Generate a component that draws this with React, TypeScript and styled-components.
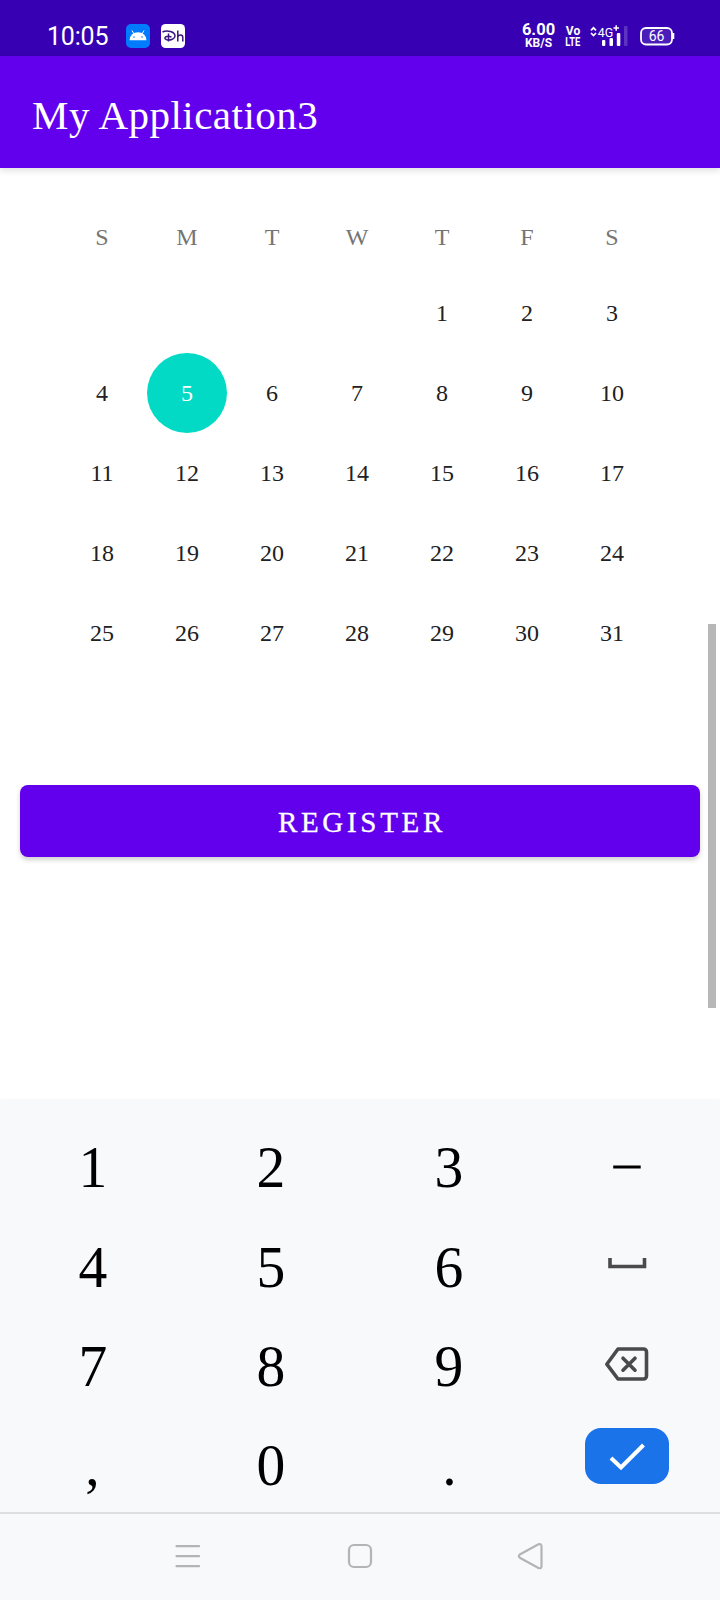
import React from "react";
import styled, { createGlobalStyle } from "styled-components";

const GlobalStyle = createGlobalStyle`
  * { box-sizing: border-box; }
  body { margin: 0; background: #fff; }
`;

const serif = `"Liberation Serif", "Times New Roman", serif`;
const sans = `Roboto, "Liberation Sans", sans-serif`;

const Screen = styled.div`
  position: relative;
  display: flex;
  flex-direction: column;
  width: 720px;
  height: 1600px;
  overflow: hidden;
  background: #fff;
  font-family: ${serif};
`;

const StatusBar = styled.header`
  display: flex;
  align-items: flex-start;
  justify-content: space-between;
  height: 56px;
  padding: 23px 45px 0 47px;
  background: #3700b3;
  color: #fff;
  font-family: ${sans};
`;

const StatusGroup = styled.div`
  display: flex;
  align-items: flex-start;
  height: 26px;
`;

const Clock = styled.span`
  width: 79px;
  font-size: 25px;
  line-height: 27px;
  letter-spacing: -0.2px;
  white-space: nowrap;
`;

const AppBadge = styled.svg`
  display: block;
  width: 24px;
  height: 24px;
  margin: 1px 11px 0 0;
`;

const Stack = styled.div<{ $width: number; $gap: number; $top?: number }>`
  display: flex;
  flex-direction: column;
  align-items: center;
  width: ${(p) => p.$width}px;
  margin-right: ${(p) => p.$gap}px;
  padding-top: ${(p) => p.$top ?? 0}px;
  font-weight: 700;
  white-space: nowrap;
`;

const StackLine = styled.span<{ $size: number; $height: number; $stretch?: number }>`
  font-size: ${(p) => p.$size}px;
  line-height: ${(p) => p.$height}px;
  transform: scaleX(${(p) => p.$stretch ?? 1});
`;

const Signal = styled.svg`
  display: block;
  width: 40px;
  height: 26px;
  margin-right: 11px;
`;

const Battery = styled.svg`
  display: block;
  width: 35px;
  height: 26px;
`;

const AppBar = styled.div`
  display: flex;
  align-items: center;
  height: 112px;
  padding: 5px 32px 0;
  background: #6200ee;
  color: #fff;
  box-shadow: 0 2px 7px rgba(0, 0, 0, 0.14);
`;

const Title = styled.h1`
  margin: 0;
  font-size: 41px;
  font-weight: 400;
  line-height: 48px;
  letter-spacing: 0.48px;
  white-space: nowrap;
`;

const Content = styled.main`
  display: flex;
  flex-direction: column;
  height: 932px;
  padding: 32px 20px 0;
`;

const Calendar = styled.div`
  display: grid;
  grid-template-columns: repeat(7, 85px);
  grid-template-rows: 73px repeat(5, 80px);
  justify-content: center;
  width: 674px;
`;

const Weekday = styled.div`
  display: flex;
  justify-content: center;
  padding-top: 23px;
  color: #757575;
  font-size: 24px;
  line-height: 28px;
`;

const Day = styled.div<{ $selected: boolean }>`
  display: flex;
  align-items: center;
  justify-content: center;
  justify-self: center;
  width: 80px;
  height: 80px;
  border-radius: 50%;
  background: ${(p) => (p.$selected ? "#03dac5" : "transparent")};
  color: ${(p) => (p.$selected ? "#fff" : "#212121")};
  font-size: 24px;
  line-height: 28px;
`;

const RegisterButton = styled.button`
  height: 72px;
  margin: 112px 0 0;
  padding: 1px 0 0 4px;
  border: 0;
  border-radius: 8px;
  background: #6200ee;
  box-shadow: 0 3px 5px rgba(0, 0, 0, 0.18);
  color: #fff;
  font-family: ${serif};
  font-size: 29px;
  line-height: 34px;
  letter-spacing: 3.7px;
  -webkit-text-stroke: 0.3px #fff;
`;

const ScrollThumb = styled.div`
  position: absolute;
  top: 624px;
  right: 4px;
  width: 8px;
  height: 384px;
  background: #b7b7b7;
`;

const Keyboard = styled.section`
  display: grid;
  grid-template-columns: repeat(4, 178.3px);
  grid-template-rows: repeat(4, 99.4px);
  height: 412px;
  padding: 17px 3px 0;
  background: #f8f9fb;
  box-shadow: 0 0 3px rgba(0, 0, 0, 0.06);
`;

const Key = styled.div`
  display: flex;
  align-items: center;
  justify-content: center;
  color: #000;
`;

const KeyLabel = styled.span`
  padding: 1px 0 0 1px;
  font-size: 60px;
  line-height: 68px;
  transform: scaleX(0.96);
`;

const KeyIcon = styled.svg`
  display: block;
  width: 84px;
  height: 56px;
`;

const EnterKey = styled.div`
  display: flex;
  width: 84px;
  height: 56px;
  margin-bottom: 18px;
  border-radius: 16px;
  background: #1a73e8;
`;

const NavBar = styled.nav`
  display: flex;
  align-items: flex-start;
  justify-content: center;
  gap: 130px;
  height: 88px;
  padding-top: 20px;
  border-top: 2px solid #dcdee0;
  background: #f8f9fb;
`;

const NavIcon = styled.svg`
  display: block;
  width: 42px;
  height: 44px;
  fill: none;
  stroke: #b3b4b5;
  stroke-width: 2.2;
  stroke-linecap: round;
  stroke-linejoin: round;
`;

const weekdays = ["S", "M", "T", "W", "T", "F", "S"];
const leadingBlanks = 4;
const selectedDay = 5;
const days = Array.from({ length: 31 }, (_, i) => i + 1);

const DashIcon = () => (
  <KeyIcon viewBox="0 0 84 56">
    <rect x="28.200" y="26.500" width="27.500" height="3" fill="#000" />
  </KeyIcon>
);

const SpaceIcon = () => (
  <KeyIcon viewBox="0 0 84 56" fill="none" stroke="#4a4a4a" strokeWidth="3.6">
    <path d="M25 20v8.500h34.500v-8.500" />
  </KeyIcon>
);

const BackspaceIcon = () => (
  <KeyIcon
    viewBox="0 0 84 56"
    fill="none"
    stroke="#4a4a4a"
    strokeWidth="3.6"
    strokeLinecap="round"
    strokeLinejoin="round"
  >
    <path d="M33 12H58.500a3 3 0 0 1 3 3V39a3 3 0 0 1-3 3H33L21.800 27.200Z" />
    <path d="m38 21.200 12 12m0-12-12 12" />
  </KeyIcon>
);

const EnterIcon = () => (
  <KeyIcon viewBox="0 0 84 56" fill="none" stroke="#fff" strokeWidth="4">
    <path d="M26 30 36 39.500 58.500 17" />
  </KeyIcon>
);

const keys: React.ReactNode[] = [
  "1", "2", "3", <DashIcon />,
  "4", "5", "6", <SpaceIcon />,
  "7", "8", "9", <BackspaceIcon />,
  ",", "0", ".", <EnterKey><EnterIcon /></EnterKey>,
];

export default function App() {
  return (
    <>
      <GlobalStyle />
      <Screen>
        <StatusBar>
          <StatusGroup>
            <Clock>10:05</Clock>
            <AppBadge viewBox="0 0 24 24">
              <rect width="24" height="24" rx="5" fill="#007bff" />
              <path d="M3.500 16.200a8.500 8 0 0 1 17 0Z" fill="#fff" />
              <path d="m8 10-2-3.500m10 3.500 2-3.500" stroke="#fff" strokeWidth="1" />
              <circle cx="8" cy="13" r="0.800" fill="#007bff" />
              <circle cx="16" cy="13" r="0.800" fill="#007bff" />
            </AppBadge>
            <AppBadge viewBox="0 0 24 24">
              <rect width="24" height="24" rx="4.500" fill="#fff" />
              <path
                d="M1.500 8C6 5.800 14 7.500 14 12c0 3-4.500 4.300-7.500 4C4 15.500 3 14 4.500 13c1.500-.9 4-.8 6 0M7.500 9.500v8M16.800 6.500v11M16.800 13c.6-2.600 5-3 5 .4V17.500"
                fill="none"
                stroke="#3a1580"
                strokeWidth="1.500"
              />
            </AppBadge>
          </StatusGroup>
          <StatusGroup>
            <Stack $width={33} $gap={10}>
              <StackLine $size={16.5} $height={14}>6.00</StackLine>
              <StackLine $size={12} $height={12}>KB/S</StackLine>
            </Stack>
            <Stack $width={16} $gap={8} $top={3}>
              <StackLine $size={12} $height={11}>Vo</StackLine>
              <StackLine $size={12} $height={10} $stretch={0.78}>LTE</StackLine>
            </Stack>
            <Signal viewBox="0 0 40 26" fill="#fff">
              <path d="m2 7.300 2.500-2.500L7 7.300M2 10l2.500 2.500L7 10" fill="none" stroke="#fff" strokeWidth="1.700" />
              <text x="8.800" y="13.800" fontSize="13.500" textLength="15.500" lengthAdjust="spacingAndGlyphs">4G</text>
              <path d="M24.500 5h5.500M27.200 2.300v5.400" stroke="#fff" strokeWidth="1.500" />
              <rect x="13" y="17" width="3.300" height="6" rx="1" />
              <rect x="20.500" y="15" width="3.500" height="8" rx="1" />
              <rect x="27.800" y="10" width="3.500" height="13" rx="1" />
              <rect x="35" y="3" width="3.500" height="20" rx="1" opacity="0.200" />
            </Signal>
            <Battery viewBox="0 0 35 26">
              <rect x="1" y="5" width="31" height="16.500" rx="5" fill="#4a1dbb" stroke="#fff" strokeWidth="1.800" />
              <path d="M33.300 10v6" stroke="#fff" strokeWidth="2" />
              <text x="16.500" y="18" fill="#fff" fontSize="14" textAnchor="middle">66</text>
            </Battery>
          </StatusGroup>
        </StatusBar>
        <AppBar>
          <Title>My Application3</Title>
        </AppBar>
        <Content>
          <Calendar>
            {weekdays.map((label, i) => (
              <Weekday key={i}>{label}</Weekday>
            ))}
            {Array.from({ length: leadingBlanks }, (_, i) => (
              <span key={`blank-${i}`} />
            ))}
            {days.map((day) => (
              <Day key={day} $selected={day === selectedDay}>
                {day}
              </Day>
            ))}
          </Calendar>
          <RegisterButton>REGISTER</RegisterButton>
        </Content>
        <Keyboard>
          {keys.map((key, i) => (
            <Key key={i}>{typeof key === "string" ? <KeyLabel>{key}</KeyLabel> : key}</Key>
          ))}
        </Keyboard>
        <NavBar>
          <NavIcon viewBox="0 0 42 44">
            <path d="M9.500 12.200h22.500M9.500 22.200h22.500M9.500 32.200h22.500" />
          </NavIcon>
          <NavIcon viewBox="0 0 42 44">
            <rect x="10" y="11" width="22" height="22" rx="5" />
          </NavIcon>
          <NavIcon viewBox="0 0 42 44">
            <path d="M8.800 20.500 27.500 10.300q3-1 3 2V32q0 3-3 2L8.800 23.700q-2-1.600 0-3.200Z" />
          </NavIcon>
        </NavBar>
        <ScrollThumb />
      </Screen>
    </>
  );
}
